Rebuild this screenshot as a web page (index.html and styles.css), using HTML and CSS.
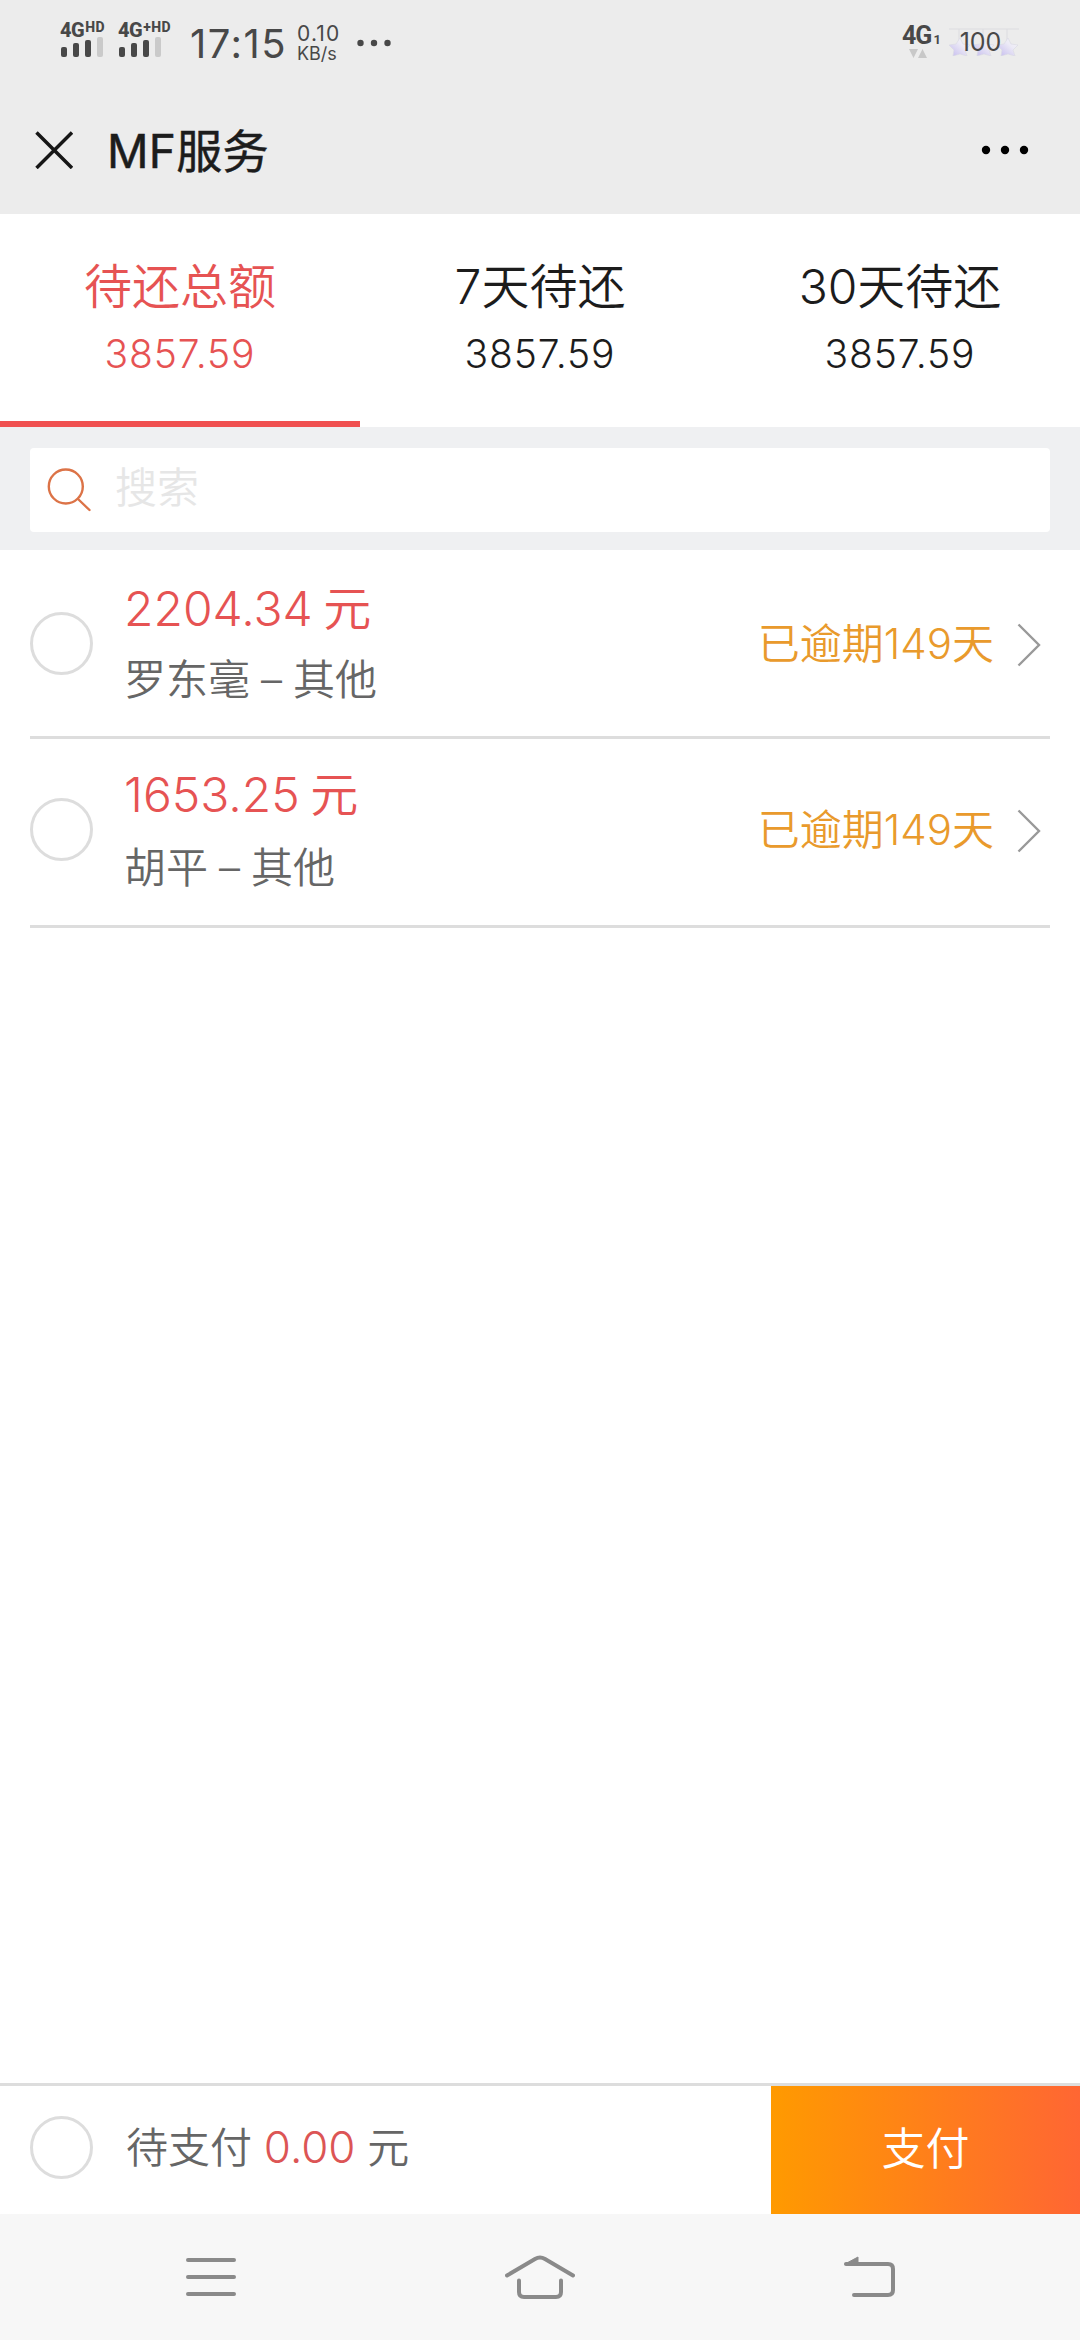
FILE: index.html
```html
<!DOCTYPE html>
<html lang="zh-CN">

<head>
    <meta charset="UTF-8">
    <title>MF服务</title>
    <meta name="viewport" content="width=device-width, initial-scale=1.0">
    <link rel="stylesheet" href="styles.css">
</head>

<body>
    <div class="page">
        <div class="status-bar">
            <div class="signal">
                <div class="net">4G<sup>HD</sup></div>
                <svg width="44" height="20" viewBox="0 0 44 20" fill="#484848">
                    <rect x="1" y="10" width="6" height="10" rx="2" />
                    <rect x="13" y="6" width="6" height="14" rx="2" />
                    <rect x="25" y="3" width="6" height="17" rx="2" />
                    <rect x="37" y="0" width="6" height="20" rx="2" fill="#cacaca" />
                </svg>
            </div>
            <div class="signal signal-plus">
                <div class="net">4G<sup>+HD</sup></div>
                <svg width="44" height="20" viewBox="0 0 44 20" fill="#484848">
                    <rect x="1" y="10" width="6" height="10" rx="2" />
                    <rect x="13" y="6" width="6" height="14" rx="2" />
                    <rect x="25" y="3" width="6" height="17" rx="2" />
                    <rect x="37" y="0" width="6" height="20" rx="2" fill="#cacaca" />
                </svg>
            </div>
            <div class="time">17:15</div>
            <div class="speed">
                <span class="speed-num">0.10</span>
                <span class="speed-unit">KB/s</span>
            </div>
            <svg class="status-dots" width="34" height="8" viewBox="0 0 34 8" fill="#484848">
                <circle cx="3.5" cy="4" r="3.2" />
                <circle cx="17" cy="4" r="3.2" />
                <circle cx="30.5" cy="4" r="3.2" />
            </svg>
            <div class="data">
                <div class="data-net">4G<sub>1</sub></div>
                <svg width="20" height="9" viewBox="0 0 20 9" fill="#c8c8c8">
                    <path d="M1 0h9L5.500 9zM10 9h9L14.500 0z" />
                </svg>
            </div>
            <div class="battery">
                <svg width="70" height="28" viewBox="0 0 70 28">
                    <defs>
                        <linearGradient id="star" x1="0" y1="1" x2="1" y2="0">
                            <stop offset="0" stop-color="#c3b9ee" />
                            <stop offset="0.6" stop-color="#eceaf6" />
                            <stop offset="1" stop-color="#f6f6f6" />
                        </linearGradient>
                    </defs>
                    <path d="M0 1h70M10 1v12M34 1v12M58 1v12" stroke="#dcdce0" fill="none" />
                    <g fill="url(#star)" stroke="#d9d8e2" stroke-width="0.6">
                        <path d="M11 10l3 6 7 1-5 5 2 6-7-2-7 2 1-6-5-5 7-1z" />
                        <path d="M35 10l3 6 7 1-5 5 2 6-7-2-7 2 1-6-5-5 7-1z" />
                        <path d="M59 10l3 6 7 1-5 5 2 6-7-2-7 2 1-6-5-5 7-1z" />
                    </g>
                </svg>
                <span class="level">100</span>
            </div>
        </div>

        <div class="header">
            <svg class="close" width="38" height="38" viewBox="0 0 38 38">
                <path d="M1.500 1.500L37 37M37 1.500L1.500 37" stroke="#161616" stroke-width="3.500" />
            </svg>
            <div class="title">MF服务</div>
            <svg class="more" width="48" height="10" viewBox="0 0 48 10">
                <circle cx="5" cy="5" r="4.200" />
                <circle cx="24" cy="5" r="4.200" />
                <circle cx="43" cy="5" r="4.200" />
            </svg>
        </div>

        <div class="tabs">
            <div class="tab active">
                <div class="tab-name">待还总额</div>
                <div class="tab-sum">3857.59</div>
            </div>
            <div class="tab">
                <div class="tab-name">7天待还</div>
                <div class="tab-sum">3857.59</div>
            </div>
            <div class="tab">
                <div class="tab-name">30天待还</div>
                <div class="tab-sum">3857.59</div>
            </div>
        </div>

        <div class="search">
            <label class="search-box">
                <svg width="44" height="44" viewBox="0 0 44 44" fill="none" stroke="#dc7347" stroke-width="2.400">
                    <circle cx="18.800" cy="18.500" r="17" />
                    <path d="M31 31L42.500 42" stroke-linecap="round" />
                </svg>
                <input type="text" placeholder="搜索">
            </label>
        </div>

        <div class="list">
            <div class="item">
                <span class="check"></span>
                <div class="info">
                    <div class="amount">2204.34 元</div>
                    <div class="name">罗东毫 – 其他</div>
                </div>
                <div class="overdue">已逾期149天</div>
                <svg class="arrow" width="24" height="44" viewBox="0 0 24 44">
                    <path d="M1.500 1.500L22 22L1.500 42.500" fill="none" stroke="#999" stroke-width="2.400" />
                </svg>
            </div>
            <div class="item">
                <span class="check"></span>
                <div class="info">
                    <div class="amount">1653.25 元</div>
                    <div class="name">胡平 – 其他</div>
                </div>
                <div class="overdue">已逾期149天</div>
                <svg class="arrow" width="24" height="44" viewBox="0 0 24 44">
                    <path d="M1.500 1.500L22 22L1.500 42.500" fill="none" stroke="#999" stroke-width="2.400" />
                </svg>
            </div>
        </div>

        <div class="pay-bar">
            <span class="check"></span>
            <div class="total">待支付 <span class="total-num">0.00</span> 元</div>
            <button class="pay">支付</button>
        </div>

        <div class="nav">
            <svg width="50" height="38" viewBox="0 0 50 38">
                <path d="M2 2H48M2 19H48M2 36H48" />
            </svg>
            <svg width="70" height="44" viewBox="0 0 70 44">
                <path d="M2 20.500L30 4Q35 1 40 4L68 20.500" />
                <path d="M14 25.500V37Q14 42 19 42H51Q56 42 56 37V25.500" />
            </svg>
            <svg width="52" height="42" viewBox="0 0 52 42">
                <path d="M2 8H44Q49 8 49 13V34Q49 39 44 39H10" />
                <path class="fill" d="M1 8L14 1V8z" />
            </svg>
        </div>
    </div>
</body>

</html>
```

FILE: styles.css
```css
* {
    box-sizing: border-box;
}

body {
    margin: 0;
    background: #fff;
    font-family: Inter, 'Noto Sans CJK SC', sans-serif;
    font-weight: 350;
    color: #1c1c1c;
}

svg {
    display: block;
    flex: none;
}

.page {
    width: 1080px;
    height: 2340px;
    display: flex;
    flex-direction: column;
    overflow: hidden;
}

/* system status bar */
.status-bar {
    height: 86px;
    background: #ececec;
    display: flex;
    align-items: flex-start;
    padding: 20px 61px 0 60px;
    color: #484848;
}

.signal {
    width: 58px;
}

.signal-plus {
    width: 72px;
}

.net {
    height: 17px;
    font-family: Roboto, sans-serif;
    font-size: 20px;
    line-height: 19px;
    font-weight: 800;
    letter-spacing: -0.5px;
    white-space: nowrap;
}

.net sup {
    display: inline-block;
    font-size: 14px;
    line-height: 14px;
    letter-spacing: 0.5px;
    vertical-align: 5px;
    margin-left: 1px;
}

.time {
    width: 107px;
    font-size: 40px;
    line-height: 48px;
    font-weight: 400;
    letter-spacing: 1.5px;
}

.speed {
    width: 60px;
    display: flex;
    flex-direction: column;
    font-weight: 400;
}

.speed-num {
    font-size: 21px;
    line-height: 27px;
    letter-spacing: 1.2px;
}

.speed-unit {
    font-size: 18px;
    line-height: 14px;
}

.status-dots {
    margin-top: 19px;
}

.data {
    width: 47px;
    margin-left: auto;
}

.data-net {
    height: 29px;
    font-family: Roboto, sans-serif;
    font-size: 25px;
    line-height: 31px;
    font-weight: 700;
    letter-spacing: -1px;
}

.data-net sub {
    font-size: 13px;
    line-height: 1;
    vertical-align: baseline;
    margin-left: 2px;
}

.data svg {
    margin-left: 6px;
}

.battery {
    display: grid;
    margin-top: 8px;
    place-items: center;
}

.battery > * {
    grid-area: 1 / 1;
}

.level {
    font-size: 25px;
    line-height: 28px;
    font-weight: 400;
    margin-right: 7px;
}

/* page header */
.header {
    height: 128px;
    background: #ececec;
    display: flex;
    align-items: center;
    padding: 0 51px 0 35px;
}

.title {
    margin: -5px 0 0 34px;
    font-size: 46px;
    font-weight: 400;
    letter-spacing: 0.3px;
    -webkit-text-stroke: 0.5px;
}

.more {
    margin-left: auto;
}

.tabs {
    height: 213px;
    display: flex;
}

.tab {
    flex: 1;
    padding-top: 41px;
    text-align: center;
    border-bottom: 6px solid transparent;
}

.tab.active {
    color: #e65353;
    border-color: #f05050;
}

.tab-name {
    font-size: 48px;
    line-height: 64px;
}

.tab-sum {
    font-size: 39px;
    line-height: 70px;
    letter-spacing: 0.9px;
}

.search {
    height: 123px;
    background: #eff0f2;
    padding: 21px 30px 0;
}

.search-box {
    height: 84px;
    background: #fff;
    border-radius: 4px;
    display: flex;
    align-items: center;
    padding-left: 17px;
}

.search-box input {
    flex: 1;
    height: 60px;
    margin: -5px 0 0 24px;
    padding: 0;
    border: none;
    outline: none;
    font: inherit;
    font-size: 42px;
}

.search-box input::placeholder {
    color: #e6e6e6;
}

/* bill list */
.list {
    flex: 1;
    padding: 0 30px;
}

.item {
    height: 189px;
    display: flex;
    align-items: center;
    border-bottom: 3px solid #ddd;
    padding-right: 9px;
}

.item + .item {
    padding-bottom: 6px;
}

.check {
    width: 63px;
    height: 63px;
    border: 3px solid #ddd;
    border-radius: 50%;
    flex: none;
}

.info {
    flex: 1;
    margin: 4px 0 0 31px;
}

.amount {
    font-size: 48px;
    line-height: 69px;
    word-spacing: -3px;
    color: #e65353;
}

.name {
    font-size: 42px;
    line-height: 73px;
    word-spacing: -0.8px;
    color: #666;
}

.item + .item .info {
    margin-top: 8px;
}

.item + .item .name {
    line-height: 77px;
}

.overdue {
    margin-top: -5px;
    font-size: 42px;
    color: #e99a2c;
}

.arrow {
    margin: 3px 0 0 23px;
}

.pay-bar {
    height: 131px;
    border-top: 3px solid #ddd;
    display: flex;
    align-items: center;
    padding-left: 30px;
}

.pay-bar .check {
    margin-bottom: 5px;
}

.total {
    margin: -11px 0 0 33px;
    font-size: 42px;
    color: #666;
}

.total-num {
    font-size: 44px;
    color: #dc5555;
}

.pay {
    width: 309px;
    height: 128px;
    margin-left: auto;
    padding: 0 0 8px;
    border: none;
    background: linear-gradient(90deg, #ff9a00, #ff6633);
    color: #fff;
    font: inherit;
    font-size: 44px;
}

/* system navigation */
.nav {
    height: 126px;
    background: #f7f7f7;
    display: flex;
    align-items: center;
    justify-content: space-between;
    padding: 0 184px 0 186px;
}

.nav path {
    fill: none;
    stroke: #8a8a8a;
    stroke-width: 4;
    stroke-linecap: round;
}

.nav .fill {
    fill: #8a8a8a;
    stroke-width: 1;
}
```
